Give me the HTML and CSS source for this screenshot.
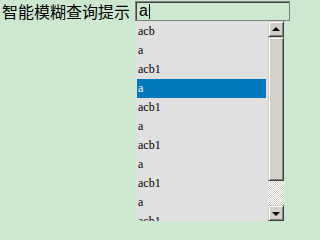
FILE: index.html
```html
<!DOCTYPE html>
<html>
<head>
<meta charset="utf-8">
<link rel="stylesheet" href="styles.css">
</head>
<body>
<div class="row">
  <span class="label">智能模糊查询提示</span>
  <div class="combo">
    <div class="input"><span class="val">a</span><span class="caret"></span></div>
    <div class="dropdown">
      <ul class="list">
        <li>acb</li>
        <li>a</li>
        <li>acb1</li>
        <li class="sel">a</li>
        <li>acb1</li>
        <li>a</li>
        <li>acb1</li>
        <li>a</li>
        <li>acb1</li>
        <li>a</li>
        <li>acb1</li>
      </ul>
      <div class="scroll">
        <div class="btn"><span class="up"></span></div>
        <div class="thumb"></div>
        <div class="track"></div>
        <div class="btn"><span class="down"></span></div>
      </div>
    </div>
  </div>
</div>
</body>
</html>
```
FILE: styles.css
```css
html, body {
  margin: 0;
  padding: 0;
  background: #cce8cf;
  height: 100%;
  overflow: hidden;
}
.row {
  display: flex;
  align-items: flex-start;
  padding: 1px 0 0 2px;
}
.label {
  font-family: "Noto Sans CJK SC", sans-serif;
  font-size: 16px;
  line-height: 20px;
  color: #000;
  width: 133px;
  white-space: nowrap;
}
.combo {
  position: relative;
  width: 155px;
}
.input {
  box-sizing: border-box;
  height: 20px;
  border-top: 1px solid #808080;
  border-left: 1px solid #808080;
  border-right: 1px solid #808080;
  border-bottom: 1px solid #808080;
  box-shadow: inset 1px 1px 0 #404040;
  display: flex;
  align-items: center;
  padding-left: 3px;
  background: #cce8cf;
}
.val {
  font-family: "Liberation Sans", Arial, sans-serif;
  font-size: 16px;
  line-height: 16px;
  color: #000;
}
.caret {
  width: 1px;
  height: 15px;
  background: #000;
  margin-left: 1px;
}
.dropdown {
  position: absolute;
  left: 1px;
  top: 20px;
  width: 148px;
  height: 200px;
  display: flex;
  background: #e0e0e0;
}
.list {
  list-style: none;
  margin: 0;
  padding: 1px 0 0 0;
  flex: 1;
  overflow: hidden;
}
.list li {
  height: 19px;
  line-height: 19px;
  margin: 0 2px 0 1px;
  padding-left: 1px;
  font-family: "Liberation Serif", "Times New Roman", serif;
  font-size: 12px;
  color: #000;
}
.list li.sel {
  background: #0078be;
  color: #fff;
}
.scroll {
  width: 16px;
  display: flex;
  flex-direction: column;
}
.btn, .thumb {
  box-sizing: border-box;
  background: #d4d0c8;
  border-top: 1px solid #d4d0c8;
  border-left: 1px solid #d4d0c8;
  border-right: 1px solid #404040;
  border-bottom: 1px solid #404040;
  box-shadow: inset 1px 1px 0 #ffffff, inset -1px -1px 0 #808080;
}
.btn {
  height: 16px;
  display: flex;
  align-items: center;
  justify-content: center;
}
.thumb {
  height: 144px;
}
.track {
  flex: 1;
  background-image: repeating-conic-gradient(#ffffff 0 25%, #d4d0c8 0 50%);
  background-size: 2px 2px;
}
.up {
  width: 0;
  height: 0;
  border-left: 4px solid transparent;
  border-right: 4px solid transparent;
  border-bottom: 4px solid #000;
  margin-top: -1px;
}
.down {
  width: 0;
  height: 0;
  border-left: 4px solid transparent;
  border-right: 4px solid transparent;
  border-top: 4px solid #000;
  margin-top: 1px;
}
```
